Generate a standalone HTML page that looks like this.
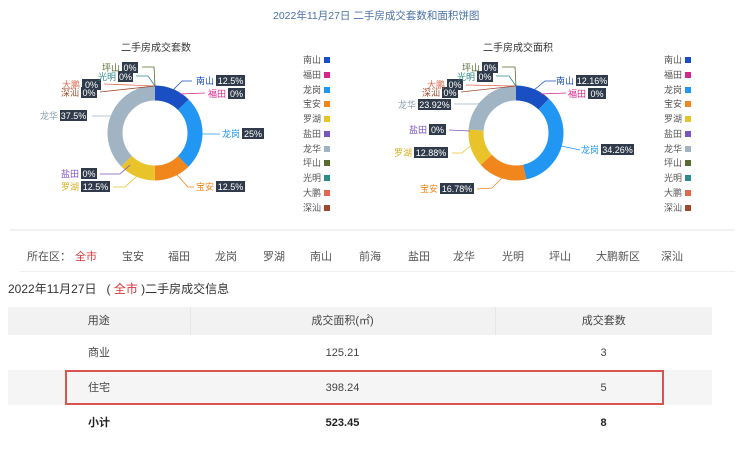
<!DOCTYPE html>
<html><head><meta charset="utf-8"><style>
body{margin:0;width:740px;height:457px;background:#fff;font-family:"Liberation Sans","Noto Sans CJK SC",sans-serif;overflow:hidden;position:relative}
.a{position:absolute;white-space:nowrap}
svg text{font-family:"Liberation Sans","Noto Sans CJK SC",sans-serif}
.nav span{position:absolute;top:248px;font-size:11px;color:#555}
table{position:absolute;left:8px;top:307px;width:704px;border-collapse:collapse;font-size:11px;color:#444;table-layout:fixed}
td{text-align:center;height:35px;padding:0;line-height:12px}
</style></head><body>
<div class="a" style="left:273px;top:8px;font-size:10.5px;color:#4a6fa5">2022年11月27日 二手房成交套数和面积饼图</div>
<svg width="740" height="225" style="position:absolute;left:0;top:0">
<text x="156" y="51" font-size="10" text-anchor="middle" fill="#333">二手房成交套数</text>
<text x="518" y="51" font-size="10" text-anchor="middle" fill="#333">二手房成交面积</text>
<g transform="rotate(-90 155 133)" fill="none" stroke-width="15">
<circle cx="155" cy="133" r="40" stroke="#1a4fc4" stroke-dasharray="31.42 251.33"/>
<circle cx="155" cy="133" r="40" stroke="#2196f3" stroke-dasharray="62.83 251.33" stroke-dashoffset="-31.42"/>
<circle cx="155" cy="133" r="40" stroke="#f0861c" stroke-dasharray="31.42 251.33" stroke-dashoffset="-94.25"/>
<circle cx="155" cy="133" r="40" stroke="#e8c42a" stroke-dasharray="31.42 251.33" stroke-dashoffset="-125.66"/>
<circle cx="155" cy="133" r="40" stroke="#a0b4c3" stroke-dasharray="94.25 251.33" stroke-dashoffset="-157.08"/>
</g>
<g transform="rotate(-90 516 133)" fill="none" stroke-width="15">
<circle cx="516" cy="133" r="40" stroke="#1a4fc4" stroke-dasharray="30.56 251.33"/>
<circle cx="516" cy="133" r="40" stroke="#2196f3" stroke-dasharray="86.11 251.33" stroke-dashoffset="-30.56"/>
<circle cx="516" cy="133" r="40" stroke="#f0861c" stroke-dasharray="42.17 251.33" stroke-dashoffset="-116.67"/>
<circle cx="516" cy="133" r="40" stroke="#e8c42a" stroke-dasharray="32.37 251.33" stroke-dashoffset="-158.84"/>
<circle cx="516" cy="133" r="40" stroke="#a0b4c3" stroke-dasharray="60.12 251.33" stroke-dashoffset="-191.21"/>
</g>
<g fill="none" stroke-width="0.8">
<path d="M155 86 L154 67 L142 67" stroke="#556b2f"/><path d="M155 86 L148 76 L136 76" stroke="#2e8b8b"/>
<path d="M155 86 L104 84" stroke="#e06a50"/><path d="M155 86 L100 92" stroke="#9b4a2e"/>
<path d="M92 116 L112 116" stroke="#a0b4c3"/><path d="M173 90 L182 81 L192 81" stroke="#1a4fc4"/>
<path d="M180 94 L205 93" stroke="#d6268c"/><path d="M202 134 L220 134" stroke="#2196f3"/>
<path d="M100 174 L120 174 L130 165" stroke="#7a55c0"/><path d="M113 187 L125 187 L137 176" stroke="#e8c42a"/>
<path d="M177 175 L188 187 L194 187" stroke="#f0861c"/>
<path d="M516 86 L515 67 L502 67" stroke="#556b2f"/><path d="M516 86 L509 76 L496 76" stroke="#2e8b8b"/>
<path d="M516 86 L466 85" stroke="#e06a50"/><path d="M516 86 L461 92" stroke="#9b4a2e"/>
<path d="M454 104 L478 104 L495 96" stroke="#a0b4c3"/><path d="M534 90 L545 81 L556 81" stroke="#1a4fc4"/>
<path d="M540 94 L566 93" stroke="#d6268c"/><path d="M561 146 L580 150" stroke="#2196f3"/>
<path d="M449 130 L470 131" stroke="#7a55c0"/><path d="M452 153 L462 153 L470 146" stroke="#e8c42a"/>
<path d="M477 189 L492 188 L502 178" stroke="#f0861c"/>
</g>
<g font-size="9" fill="#fff" text-anchor="middle">
<g fill="#2f3b4a">
<rect x="122" y="62" width="16" height="11"/><rect x="118" y="71" width="15" height="11"/><rect x="82" y="79" width="19" height="11"/><rect x="81" y="87" width="16" height="11"/><rect x="60" y="110" width="27" height="11"/><rect x="216" y="75" width="29" height="11"/><rect x="228" y="88" width="17" height="11"/><rect x="242" y="128" width="22" height="11"/><rect x="81" y="168" width="16" height="11"/><rect x="81" y="181" width="29" height="11"/><rect x="216" y="181" width="29" height="11"/>
<rect x="482" y="62" width="16" height="11"/><rect x="477" y="71" width="16" height="11"/><rect x="447" y="79" width="16" height="11"/><rect x="442" y="87" width="16" height="11"/><rect x="418" y="99" width="33" height="11"/><rect x="576" y="75" width="32" height="11"/><rect x="588" y="88" width="18" height="11"/><rect x="601" y="144" width="33" height="11"/><rect x="429" y="124" width="17" height="11"/><rect x="414" y="147" width="34" height="11"/><rect x="440" y="183" width="34" height="11"/>
</g>
<text x="130" y="71">0%</text><text x="125.5" y="80">0%</text><text x="91.5" y="88">0%</text><text x="89" y="96">0%</text><text x="73.5" y="119">37.5%</text><text x="230.5" y="84">12.5%</text><text x="236.5" y="97">0%</text><text x="253" y="137">25%</text><text x="89" y="177">0%</text><text x="95.5" y="190">12.5%</text><text x="230.5" y="190">12.5%</text>
<text x="490" y="71">0%</text><text x="485" y="80">0%</text><text x="455" y="88">0%</text><text x="450" y="96">0%</text><text x="434.5" y="108">23.92%</text><text x="592" y="84">12.16%</text><text x="597" y="97">0%</text><text x="617.5" y="153">34.26%</text><text x="437.5" y="133">0%</text><text x="431" y="156">12.88%</text><text x="457" y="192">16.78%</text>
</g>
<g font-size="9" text-anchor="end">
<text x="120" y="71" fill="#556b2f">坪山</text><text x="116" y="80" fill="#2e8b8b">光明</text><text x="80" y="88" fill="#e06a50">大鹏</text><text x="79" y="96" fill="#9b4a2e">深汕</text><text x="58" y="119" fill="#8aa0b0">龙华</text><text x="214" y="84" fill="#1a4fc4">南山</text><text x="226" y="97" fill="#d6268c">福田</text><text x="240" y="137" fill="#2196f3">龙岗</text><text x="79" y="177" fill="#7a55c0">盐田</text><text x="79" y="190" fill="#d4b020">罗湖</text><text x="214" y="190" fill="#f0861c">宝安</text>
<text x="480" y="71" fill="#556b2f">坪山</text><text x="475" y="80" fill="#2e8b8b">光明</text><text x="445" y="88" fill="#e06a50">大鹏</text><text x="440" y="96" fill="#9b4a2e">深汕</text><text x="416" y="108" fill="#8aa0b0">龙华</text><text x="574" y="84" fill="#1a4fc4">南山</text><text x="586" y="97" fill="#d6268c">福田</text><text x="599" y="153" fill="#2196f3">龙岗</text><text x="427" y="133" fill="#7a55c0">盐田</text><text x="412" y="156" fill="#d4b020">罗湖</text><text x="438" y="192" fill="#f0861c">宝安</text>
</g>
<g font-size="9" fill="#555">
<text x="303" y="63">南山</text><text x="303" y="78">福田</text><text x="303" y="93">龙岗</text><text x="303" y="107">宝安</text><text x="303" y="122">罗湖</text><text x="303" y="137">盐田</text><text x="303" y="152">龙华</text><text x="303" y="166">坪山</text><text x="303" y="181">光明</text><text x="303" y="196">大鹏</text><text x="303" y="211">深汕</text>
<text x="664" y="63">南山</text><text x="664" y="78">福田</text><text x="664" y="93">龙岗</text><text x="664" y="107">宝安</text><text x="664" y="122">罗湖</text><text x="664" y="137">盐田</text><text x="664" y="152">龙华</text><text x="664" y="166">坪山</text><text x="664" y="181">光明</text><text x="664" y="196">大鹏</text><text x="664" y="211">深汕</text>
</g>
<g>
<rect x="324" y="57" width="6" height="6" fill="#1a4fc4"/><rect x="324" y="72" width="6" height="6" fill="#d6268c"/><rect x="324" y="87" width="6" height="6" fill="#2196f3"/><rect x="324" y="101" width="6" height="6" fill="#f0861c"/><rect x="324" y="116" width="6" height="6" fill="#e8c42a"/><rect x="324" y="131" width="6" height="6" fill="#7a55c0"/><rect x="324" y="146" width="6" height="6" fill="#a0b4c3"/><rect x="324" y="160" width="6" height="6" fill="#556b2f"/><rect x="324" y="175" width="6" height="6" fill="#2e8b8b"/><rect x="324" y="190" width="6" height="6" fill="#e06a50"/><rect x="324" y="205" width="6" height="6" fill="#9b4a2e"/>
<rect x="685" y="57" width="6" height="6" fill="#1a4fc4"/><rect x="685" y="72" width="6" height="6" fill="#d6268c"/><rect x="685" y="87" width="6" height="6" fill="#2196f3"/><rect x="685" y="101" width="6" height="6" fill="#f0861c"/><rect x="685" y="116" width="6" height="6" fill="#e8c42a"/><rect x="685" y="131" width="6" height="6" fill="#7a55c0"/><rect x="685" y="146" width="6" height="6" fill="#a0b4c3"/><rect x="685" y="160" width="6" height="6" fill="#556b2f"/><rect x="685" y="175" width="6" height="6" fill="#2e8b8b"/><rect x="685" y="190" width="6" height="6" fill="#e06a50"/><rect x="685" y="205" width="6" height="6" fill="#9b4a2e"/>
</g>
</svg>
<div class="a" style="left:10px;top:229px;width:725px;height:2px;background:#f2f2f2"></div>
<div class="a" style="left:20px;top:271px;width:715px;height:1px;background:#f0f0f0"></div>
<div class="nav">
<span style="left:27px">所在区：</span><span style="left:75px;color:#d9363e">全市</span><span style="left:122px">宝安</span><span style="left:168px">福田</span><span style="left:215px">龙岗</span><span style="left:263px">罗湖</span><span style="left:310px">南山</span><span style="left:359px">前海</span><span style="left:408px">盐田</span><span style="left:453px">龙华</span><span style="left:502px">光明</span><span style="left:549px">坪山</span><span style="left:596px">大鹏新区</span><span style="left:661px">深汕</span>
</div>
<div class="a" style="left:8px;top:280px;font-size:12px;color:#333">2022年11月27日 &nbsp;&nbsp;(<span style="color:#d9363e"> 全市 </span>)二手房成交信息</div>
<table>
<colgroup><col style="width:182px"><col style="width:305px"><col></colgroup>
<tr style="background:#f2f2f2"><td style="height:28px;border-right:1px solid #e6e6e6">用途</td><td style="height:28px;border-right:1px solid #e6e6e6">成交面积(㎡)</td><td style="height:28px">成交套数</td></tr>
<tr><td>商业</td><td>125.21</td><td>3</td></tr>
<tr style="background:#f5f5f5"><td>住宅</td><td>398.24</td><td>5</td></tr>
<tr style="font-weight:bold;color:#222"><td>小计</td><td>523.45</td><td>8</td></tr>
</table>
<div class="a" style="left:65px;top:370px;width:595px;height:31px;border:2px solid #d9534f"></div>
</body></html>
